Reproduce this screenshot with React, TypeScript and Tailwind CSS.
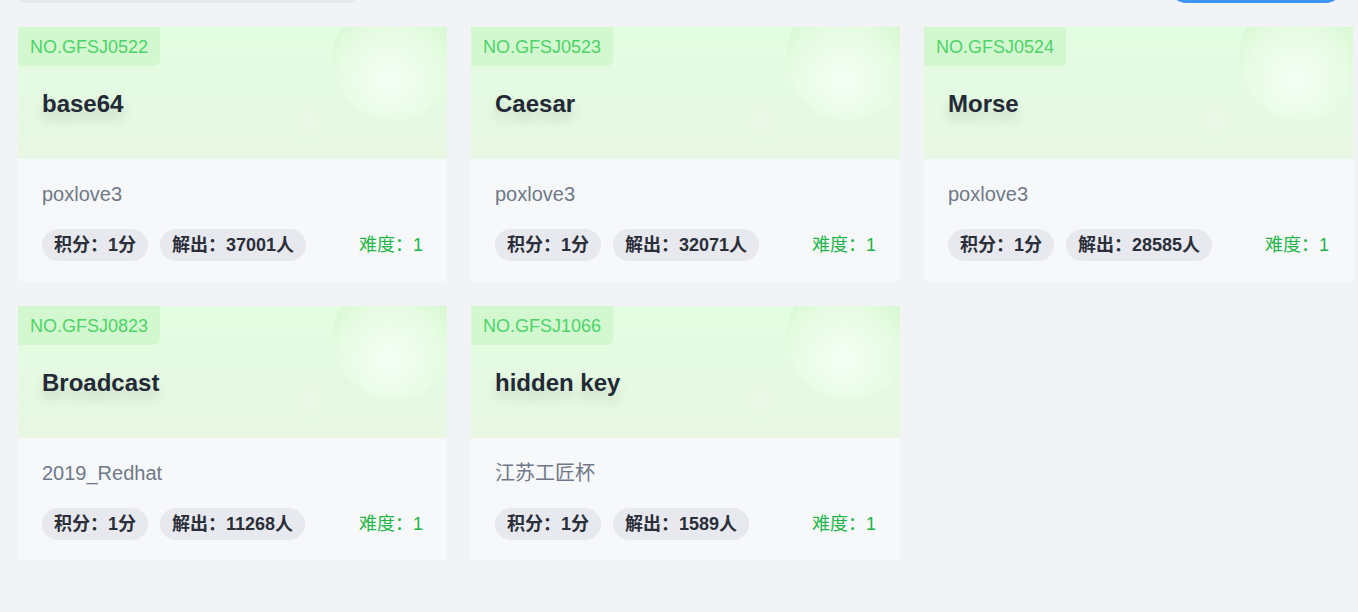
import React from "react";

type Task = {
  no: string;
  title: string;
  author: string;
  score: number;
  solved: number;
  level: number;
};

const tasks: Task[] = [
  { no: "NO.GFSJ0522", title: "base64", author: "poxlove3", score: 1, solved: 37001, level: 1 },
  { no: "NO.GFSJ0523", title: "Caesar", author: "poxlove3", score: 1, solved: 32071, level: 1 },
  { no: "NO.GFSJ0524", title: "Morse", author: "poxlove3", score: 1, solved: 28585, level: 1 },
  { no: "NO.GFSJ0823", title: "Broadcast", author: "2019_Redhat", score: 1, solved: 11268, level: 1 },
  { no: "NO.GFSJ1066", title: "hidden key", author: "江苏工匠杯", score: 1, solved: 1589, level: 1 },
];

const TaskCard = ({ task }: { task: Task }) => {
  return (
    <div className="flex flex-col bg-[#f7f8fa]">
      {/* Header with bubbles */}
      <div className="relative h-[132px] overflow-hidden bg-gradient-to-b from-[#e2fde2] to-[#e8f7e3]">
        <div className="absolute left-[315px] top-[-31px] h-[124px] w-[124px] rounded-full bg-[radial-gradient(circle_at_46%_68%,#f4fff4_0%,#e8fce5_45%,#c4f3bb_100%)]" />
        <div className="absolute left-[270px] top-[74px] h-[42px] w-[42px] rounded-full bg-[radial-gradient(circle,#ebf9e8_0%,#e6f8e1_60%,#dbf4d4_100%)]" />
        <div className="relative flex flex-col items-start">
          <span className="flex h-[39px] items-center rounded-br-md bg-[#d3f8cf] px-3 text-lg text-[#4cd468]">
            {task.no}
          </span>
          <h3 className="mt-6 pl-6 text-2xl font-bold leading-7 text-[#232a36] [text-shadow:0_8px_12px_rgba(0,0,0,0.15)]">
            {task.title}
          </h3>
        </div>
      </div>

      {/* Body */}
      <div className="flex flex-col px-6 pb-5 pt-[21px]">
        <p className="text-xl leading-7 text-[#6f7888]">{task.author}</p>
        <div className="mt-[21px] flex items-center">
          <span className="flex h-8 items-center rounded-full bg-[#e8e9ee] px-3 text-lg font-bold text-[#2b2f3a]">
            积分：{task.score}分
          </span>
          <span className="ml-3 flex h-8 items-center rounded-full bg-[#e8e9ee] px-3 text-lg font-bold text-[#2b2f3a]">
            解出：{task.solved}人
          </span>
          <span className="ml-auto text-lg text-[#21b547]">难度：{task.level}</span>
        </div>
      </div>
    </div>
  );
};

export default function App() {
  return (
    <div className="min-h-[612px] overflow-hidden bg-[#f2f3f5] pl-[18px] pr-[5px] font-['Liberation_Sans','Noto_Sans_CJK_SC',sans-serif]">
      {/* Toolbar (scrolled mostly out of view) */}
      <div className="-mt-[37px] flex items-center justify-between pr-[8px]">
        <div className="h-10 w-[338px] rounded-md bg-[#e6e8ee]" />
        <div className="h-10 w-[178px] rounded-full bg-[#3f93f7]" />
      </div>

      <div className="mt-6 grid grid-cols-3 gap-x-6 gap-y-[25px]">
        {tasks.map((t) => (
          <TaskCard key={t.no} task={t} />
        ))}
      </div>
    </div>
  );
}
